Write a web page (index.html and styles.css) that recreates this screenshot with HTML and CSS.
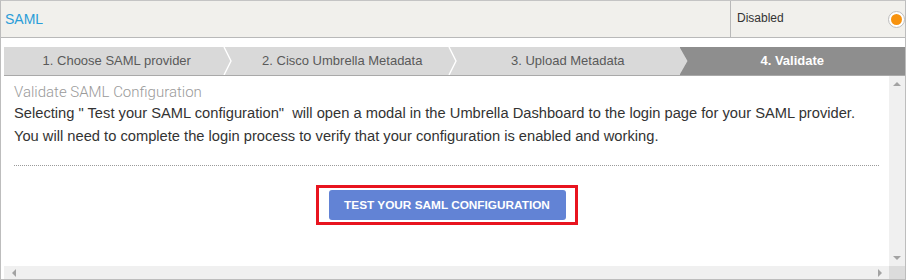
FILE: index.html
```html
<!DOCTYPE html>
<html>
<head>
<meta charset="utf-8">
<link rel="stylesheet" href="styles.css">
</head>
<body>
<div class="frame">
  <div class="header">
    <div class="title">SAML</div>
    <div class="status">
      <span class="status-label">Disabled</span>
      <span class="radio"><span class="radio-dot"></span></span>
    </div>
  </div>
  <div class="panel">
    <div class="steps">
      <div class="step">1. Choose SAML provider<svg class="chev" width="10" height="28" viewBox="0 0 10 28"><polyline points="1,0 8,14 1,28" fill="none" stroke="#fff" stroke-width="1.4"/></svg></div>
      <div class="step">2. Cisco Umbrella Metadata<svg class="chev" width="10" height="28" viewBox="0 0 10 28"><polyline points="1,0 8,14 1,28" fill="none" stroke="#fff" stroke-width="1.4"/></svg></div>
      <div class="step">3. Upload Metadata</div>
      <div class="step active">4. Validate</div>
    </div>
    <div class="scroller">
      <div class="content">
        <div class="subtitle">Validate SAML Configuration</div>
        <p class="desc">Selecting " Test your SAML configuration"&nbsp; will open a modal in the Umbrella Dashboard to the login page for your SAML provider.<br>You will need to complete the login process to verify that your configuration is enabled and working.</p>
        <div class="dots"></div>
        <div class="btn-row">
          <div class="highlight"><button class="btn">TEST YOUR SAML CONFIGURATION</button></div>
        </div>
      </div>
      <div class="vbar">
        <span class="arr up"></span>
        <span class="arr down"></span>
      </div>
      <div class="hbar">
        <span class="arr left"></span>
        <span class="arr right"></span>
      </div>
      <div class="corner"></div>
    </div>
  </div>
</div>
</body>
</html>
```
FILE: styles.css
```css
html, body {
  margin: 0;
  padding: 0;
  background: #fff;
}
.frame {
  width: 906px;
  height: 280px;
  box-sizing: border-box;
  border: 1px solid #bdbdbd;
  border-top-color: #c4c4c4;
  display: flex;
  flex-direction: column;
  font-family: "Liberation Sans", Arial, sans-serif;
  overflow: hidden;
}
.header {
  height: 36px;
  flex: none;
  display: flex;
  background: #f1f0ec;
  border-bottom: 1px solid #b9b9b9;
}
.title {
  flex: 1;
  padding-left: 4px;
  font-size: 14px;
  line-height: 36px;
  color: #2a9dd8;
}
.status {
  width: 168px;
  border-left: 1px solid #b9b9b9;
  display: flex;
  align-items: center;
  justify-content: space-between;
  padding-left: 6px;
  padding-right: 0;
}
.status-label {
  font-size: 12px;
  color: #333;
  position: relative;
  top: -1px;
}
.radio {
  width: 15px;
  height: 15px;
  border: 1px solid #bdbdbd;
  border-radius: 50%;
  background: #fff;
  display: flex;
  align-items: center;
  justify-content: center;
}
.radio-dot {
  width: 11px;
  height: 11px;
  border-radius: 50%;
  background: #f7930f;
}
.panel {
  flex: 1;
  display: flex;
  flex-direction: column;
  padding: 9px 0 0 3px;
  min-height: 0;
}
.steps {
  display: flex;
  height: 28px;
  flex: none;
  background: #d9d9d9;
  border-bottom: 1px solid #a9a9a9;
}
.step {
  flex: 1;
  position: relative;
  text-align: center;
  font-size: 13px;
  line-height: 28px;
  color: #5a5a5a;
}
.chev {
  position: absolute;
  top: 0;
  right: -3px;
  z-index: 2;
}
.step.active {
  background: #8e8e8e;
  color: #fff;
  font-weight: bold;
  margin-left: -1px;
  clip-path: polygon(0 0, 100% 0, 100% 100%, 0 100%, 8px 50%);
}
.scroller {
  flex: 1;
  display: grid;
  grid-template-columns: 1fr 16px;
  grid-template-rows: 1fr 13px;
  min-height: 0;
}
.content {
  padding: 6px 10px 0 10px;
  overflow: hidden;
}
.subtitle {
  font-family: Roboto, "Liberation Sans", sans-serif;
  font-weight: 300;
  font-size: 15px;
  line-height: 20px;
  color: #9a9a9a;
}
.desc {
  margin: 0;
  font-size: 14.7px;
  line-height: 23px;
  color: #333;
}
.dots {
  margin-top: 17px;
  border-top: 1px dotted #9a9a9a;
}
.btn-row {
  display: flex;
  justify-content: center;
  margin-top: 19px;
}
.highlight {
  border: 3px solid #e8141f;
  padding: 2px 9px 2px 10px;
}
.btn {
  width: 237px;
  height: 30px;
  border: none;
  border-radius: 3px;
  background: #6283d5;
  color: #fff;
  font-family: "Liberation Sans", Arial, sans-serif;
  font-weight: bold;
  font-size: 11.8px;
  padding: 0;
}
.vbar {
  background: #f0f0f0;
  position: relative;
}
.hbar {
  background: #f0f0f0;
  position: relative;
}
.corner {
  background: #dcdcdc;
}
.arr {
  position: absolute;
  width: 0;
  height: 0;
}
.arr.up {
  top: 6px;
  left: 4px;
  border-left: 4px solid transparent;
  border-right: 4px solid transparent;
  border-bottom: 4px solid #a3a3a3;
}
.arr.down {
  bottom: 6px;
  left: 4px;
  border-left: 4px solid transparent;
  border-right: 4px solid transparent;
  border-top: 4px solid #a3a3a3;
}
.arr.left {
  top: 3px;
  left: 8px;
  border-top: 4px solid transparent;
  border-bottom: 4px solid transparent;
  border-right: 4px solid #a3a3a3;
}
.arr.right {
  top: 3px;
  right: 7px;
  border-top: 4px solid transparent;
  border-bottom: 4px solid transparent;
  border-left: 4px solid #a3a3a3;
}
```
